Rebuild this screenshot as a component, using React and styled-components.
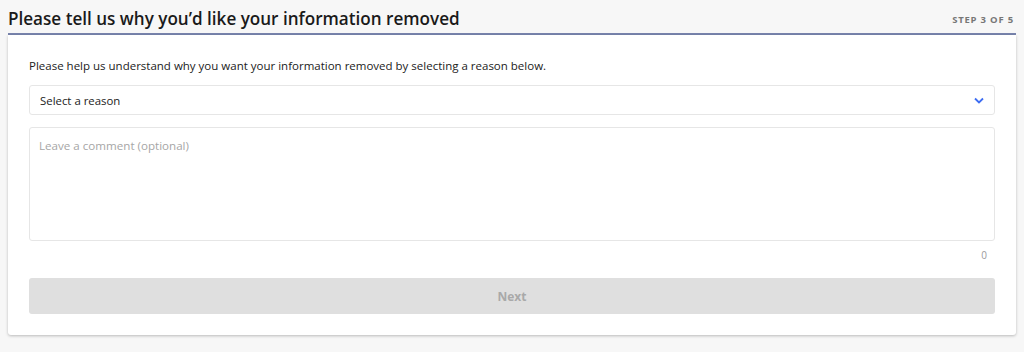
import React from "react";
import styled, { createGlobalStyle } from "styled-components";

const GlobalStyle = createGlobalStyle`
  html, body {
    margin: 0;
    padding: 0;
    background: #f7f7f7;
    font-family: "Open Sans", "Noto Sans", Arial, sans-serif;
    color: #222;
  }
`;

const Page = styled.div`
  padding: 0 8px 16px 8px;
`;

const Header = styled.div`
  display: flex;
  align-items: flex-end;
  justify-content: space-between;
  height: 33px;
  border-bottom: 2px solid #7884ad;
  & h1 {
    margin: 0;
    font-size: 17.1px;
    font-weight: 600;
    line-height: 28px;
    color: #1a1a1a;
  }
  & .step {
    font-size: 9.5px;
    font-weight: 700;
    letter-spacing: 0.8px;
    color: #777;
    line-height: 26px;
    padding-right: 2px;
  }
`;

const Card = styled.div`
  background: #fff;
  box-shadow: 0 1px 3px rgba(0, 0, 0, 0.25);
  border-radius: 0 0 3px 3px;
  padding: 22px 21px 21px 21px;
  display: flex;
  flex-direction: column;
`;

const Intro = styled.p`
  margin: 0 0 10px 0;
  font-size: 11.5px;
  line-height: 18px;
  color: #222;
`;

const SelectBox = styled.div`
  height: 30px;
  border: 1px solid #e6e6e6;
  border-radius: 3px;
  display: flex;
  align-items: center;
  justify-content: space-between;
  padding: 0 10px;
  font-size: 11.4px;
  color: #222;
  box-sizing: border-box;
`;

const Comment = styled.div`
  margin-top: 12px;
  height: 114px;
  border: 1px solid #e6e6e6;
  border-radius: 3px;
  box-sizing: border-box;
  padding: 10px 9px;
  font-size: 11.6px;
  color: #a6a6a6;
`;

const Counter = styled.div`
  text-align: right;
  font-size: 10px;
  color: #9a9a9a;
  padding: 7px 8px 0 0;
  height: 37px;
  box-sizing: border-box;
`;

const Button = styled.button`
  height: 36px;
  border: none;
  border-radius: 3px;
  background: #dfdfdf;
  color: #a9a9a9;
  font-family: inherit;
  font-size: 12px;
  font-weight: 700;
`;

const Chevron = () => (
  <svg width="10" height="7" viewBox="0 0 10 7">
    <path d="M1 1.5 L5 5.5 L9 1.5" fill="none" stroke="#3d6df2" strokeWidth="1.8" />
  </svg>
);

export default function App() {
  return (
    <Page>
      <GlobalStyle />
      <Header>
        <h1>Please tell us why you’d like your information removed</h1>
        <span className="step">STEP 3 OF 5</span>
      </Header>
      <Card>
        <Intro>
          Please help us understand why you want your information removed by selecting a reason below.
        </Intro>
        <SelectBox>
          <span>Select a reason</span>
          <Chevron />
        </SelectBox>
        <Comment>Leave a comment (optional)</Comment>
        <Counter>0</Counter>
        <Button disabled>Next</Button>
      </Card>
    </Page>
  );
}
